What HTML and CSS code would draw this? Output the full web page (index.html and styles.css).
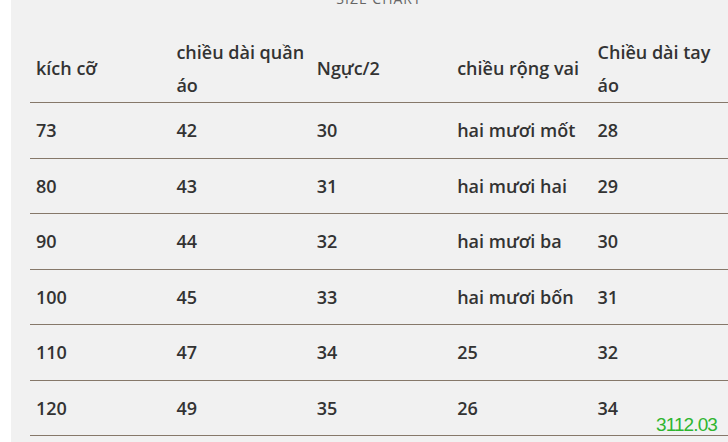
FILE: index.html
```html
<!DOCTYPE html>
<html lang="vi">
<head>
<meta charset="utf-8">
<link rel="stylesheet" href="styles.css">
</head>
<body>
<div class="panel">
  <div class="title">SIZE CHART</div>
  <table class="chart">
    <thead>
      <tr>
        <th>kích cỡ</th>
        <th>chiều dài quần áo</th>
        <th>Ngực/2</th>
        <th>chiều rộng vai</th>
        <th>Chiều dài tay áo</th>
      </tr>
    </thead>
    <tbody>
      <tr><td>73</td><td>42</td><td>30</td><td>hai mươi mốt</td><td>28</td></tr>
      <tr><td>80</td><td>43</td><td>31</td><td>hai mươi hai</td><td>29</td></tr>
      <tr><td>90</td><td>44</td><td>32</td><td>hai mươi ba</td><td>30</td></tr>
      <tr><td>100</td><td>45</td><td>33</td><td>hai mươi bốn</td><td>31</td></tr>
      <tr><td>110</td><td>47</td><td>34</td><td>25</td><td>32</td></tr>
      <tr><td>120</td><td>49</td><td>35</td><td>26</td><td>34</td></tr>
    </tbody>
  </table>
</div>
<div class="stamp">3112.03</div>
</body>
</html>
```
FILE: styles.css
```css
html, body {
  margin: 0;
  padding: 0;
  background: #ffffff;
  overflow: hidden;
}
body {
  width: 728px;
  height: 442px;
  position: relative;
}
.panel {
  margin-left: 11px;
  padding-left: 19px;
  background: #f1f1f1;
  height: 442px;
  overflow: hidden;
  font-family: "Open Sans", "DejaVu Sans", sans-serif;
  color: #333333;
}
.title {
  margin-top: -9px;
  height: 16px;
  line-height: 16px;
  font-size: 14px;
  letter-spacing: 1px;
  color: #666666;
  text-align: center;
}
.chart {
  border-collapse: collapse;
  width: 702px;
  table-layout: fixed;
  margin-top: 28px;
}
.chart th,
.chart td {
  text-align: left;
  vertical-align: middle;
  font-size: 18px;
  font-weight: 600;
  padding: 0 6px;
  border-bottom: 1px solid #86786a;
}
.chart th {
  line-height: 33px;
  height: 67px;
  padding-bottom: 0;
}
.chart td {
  height: 54.5px;
  line-height: 24px;
}
.stamp {
  position: absolute;
  right: 11px;
  top: 414px;
  font-family: "Liberation Sans", Arial, sans-serif;
  font-size: 19px;
  letter-spacing: -0.9px;
  color: #2fb52f;
}
```
